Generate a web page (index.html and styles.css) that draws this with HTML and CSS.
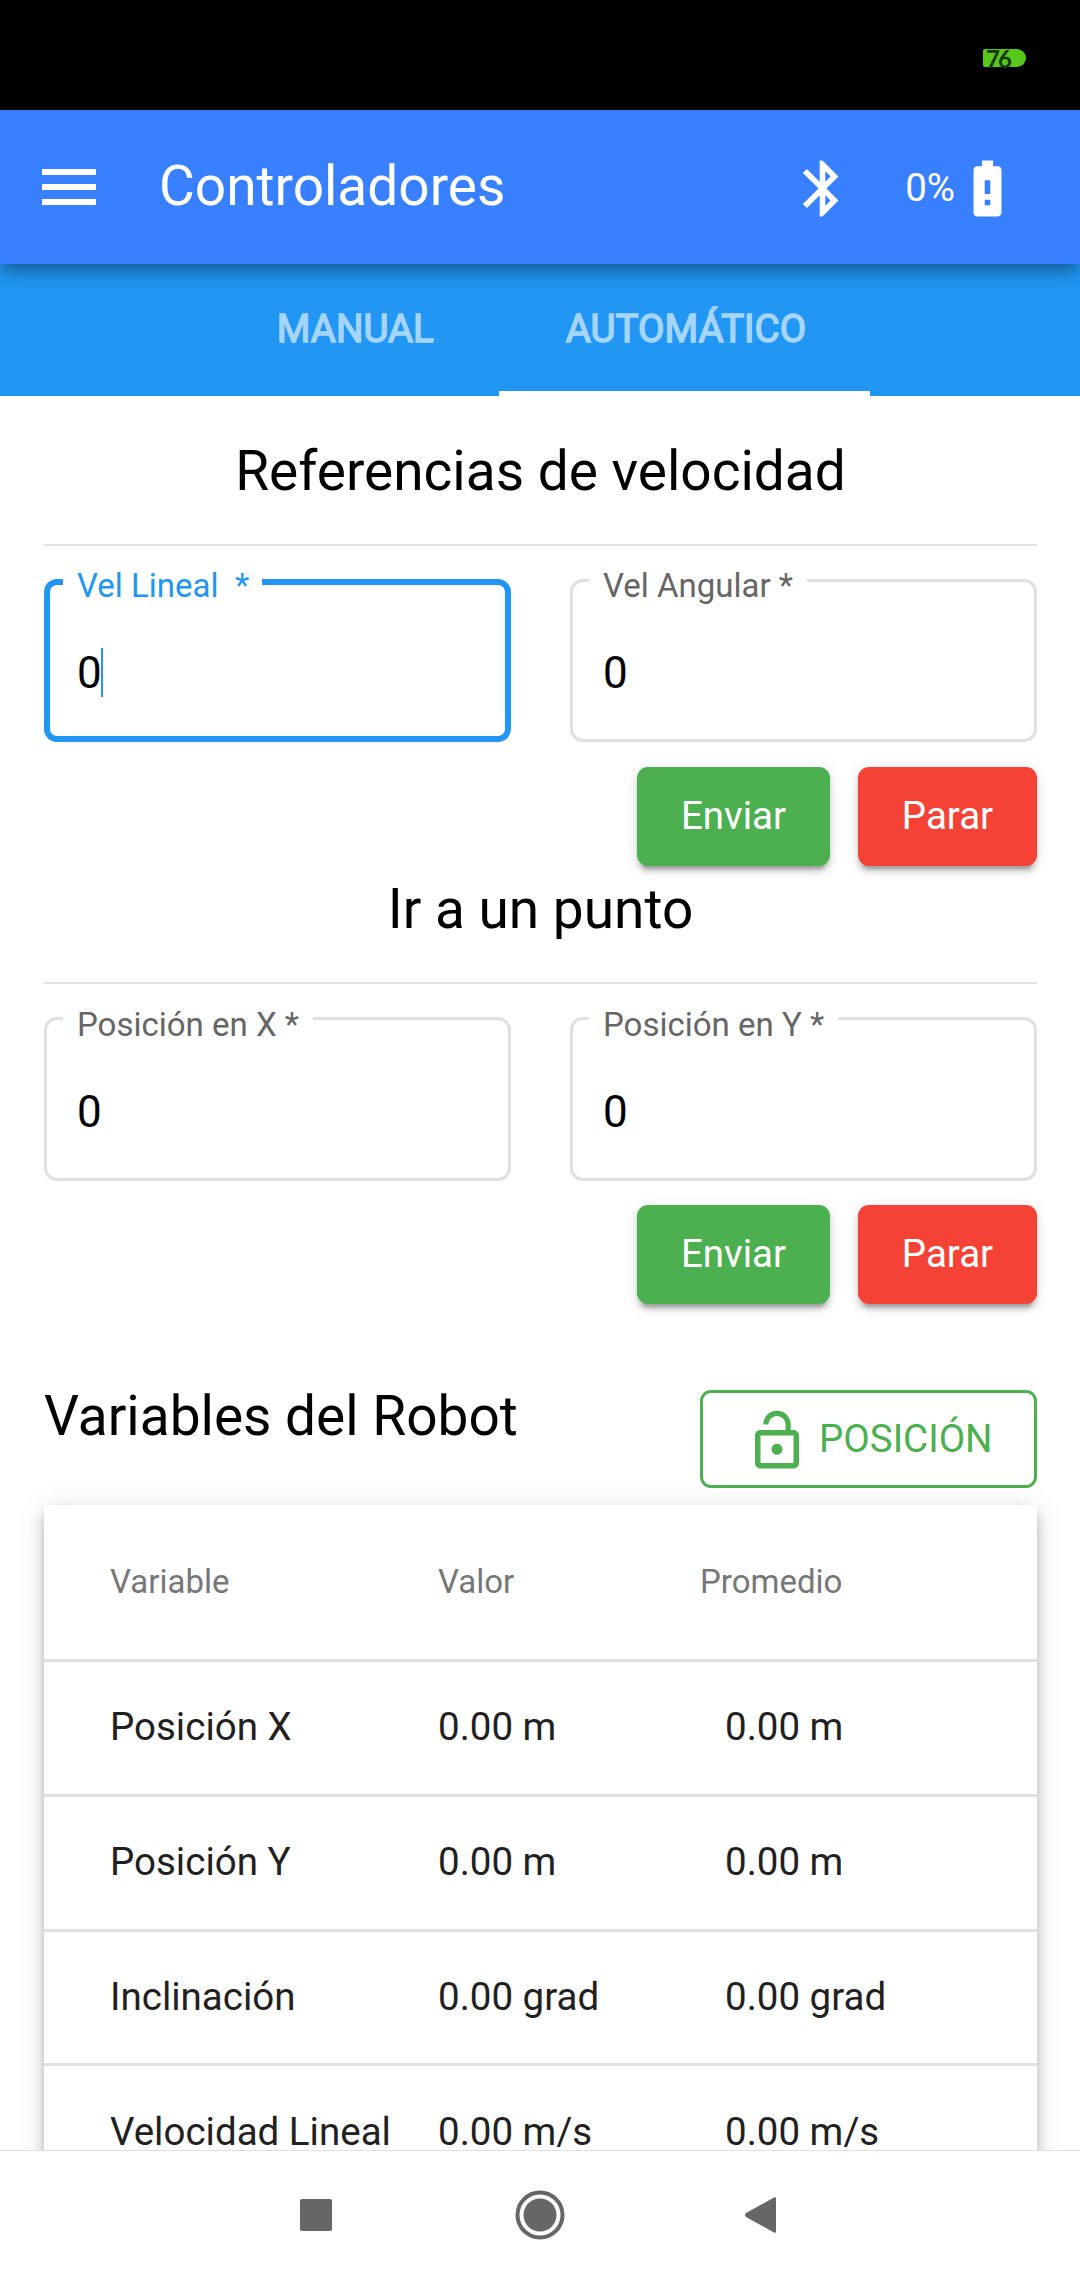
FILE: index.html
```html
<!DOCTYPE html>
<html lang="es">
<head>
<meta charset="utf-8">
<title>Controladores</title>
<link rel="stylesheet" href="styles.css">
</head>
<body>
<div class="status"><div class="charge">76</div></div>
<header class="appbar">
  <svg class="menu" viewBox="0 0 24 24"><path d="M3 6h18v2H3zM3 11h18v2H3zM3 16h18v2H3z"/></svg>
  <h1 class="title">Controladores</h1>
  <svg class="bluetooth" viewBox="0 0 24 24"><path d="M17.71 7.71L12 2h-1v7.59L6.41 5 5 6.41 10.59 12 5 17.59 6.41 19 11 14.41V22h1l5.71-5.71-4.3-4.29 4.3-4.29zM13 5.83l1.88 1.88L13 9.59V5.83zm1.88 10.46L13 18.17v-3.76l1.88 1.88z"/></svg>
  <span class="percent">0%</span>
  <svg class="battery" viewBox="0 0 24 24"><path d="M15.67 4H14V2h-4v2H8.33C7.6 4 7 4.6 7 5.33v15.33C7 21.4 7.6 22 8.33 22h7.33c.74 0 1.34-.6 1.34-1.33V5.33C17 4.6 16.4 4 15.67 4zM13 18h-2v-2h2v2zm0-4h-2V9h2v5z"/></svg>
</header>
<nav class="tabs">
  <div class="tab">MANUAL</div>
  <div class="tab active">AUTOMÁTICO</div>
</nav>
<main class="content">
  <h2 class="heading first">Referencias de velocidad</h2>
  <div class="fields">
    <div class="field focused"><label class="label">Vel Lineal&nbsp; *</label><span>0</span><i class="caret"></i></div>
    <div class="field"><label class="label">Vel Angular *</label><span>0</span></div>
  </div>
  <div class="actions"><button class="btn send">Enviar</button><button class="btn stop">Parar</button></div>
  <h2 class="heading">Ir a un punto</h2>
  <div class="fields point">
    <div class="field"><label class="label">Posición en X *</label><span>0</span></div>
    <div class="field"><label class="label">Posición en Y *</label><span>0</span></div>
  </div>
  <div class="actions point-actions"><button class="btn send">Enviar</button><button class="btn stop">Parar</button></div>
  <div class="robot">
    <h2 class="robot-title">Variables del Robot</h2>
    <button class="outlined">
      <svg class="lock" viewBox="0 0 24 24"><path d="M12 17c1.1 0 2-.9 2-2s-.9-2-2-2-2 .9-2 2 .9 2 2 2zm6-9h-1V6c0-2.76-2.24-5-5-5S7 3.24 7 6h1.9c0-1.71 1.39-3.1 3.1-3.1 1.71 0 3.1 1.39 3.1 3.1v2H6c-1.1 0-2 .9-2 2v10c0 1.1.9 2 2 2h12c1.1 0 2-.9 2-2V10c0-1.1-.9-2-2-2zm0 12H6V10h12v10z"/></svg>
      <span>POSICIÓN</span>
    </button>
  </div>
  <div class="table">
    <div class="row head"><span>Variable</span><span>Valor</span><span>Promedio</span></div>
    <div class="row"><span>Posición X</span><span>0.00 m</span><span class="avg">0.00 m</span></div>
    <div class="row"><span>Posición Y</span><span>0.00 m</span><span class="avg">0.00 m</span></div>
    <div class="row"><span>Inclinación</span><span>0.00 grad</span><span class="avg">0.00 grad</span></div>
    <div class="row"><span>Velocidad Lineal</span><span>0.00 m/s</span><span class="avg">0.00 m/s</span></div>
  </div>
</main>
<footer class="sysnav">
  <svg class="key" viewBox="0 0 50 50"><rect x="9" y="9" width="32" height="32" rx="2"/></svg>
  <svg class="key" viewBox="0 0 50 50"><circle cx="25" cy="25" r="22.5" fill="none" stroke="#666" stroke-width="4"/><circle cx="25" cy="25" r="16.5"/></svg>
  <svg class="key" viewBox="0 0 50 50"><path d="M39 7.500Q41 6.500 41 8.500V41.500Q41 43.500 39 42.500L11 27Q9 25 11 23Z"/></svg>
</footer>
</body>
</html>
```
FILE: styles.css
```css
* { box-sizing: border-box; }
html, body { margin: 0; height: 2280px; overflow: hidden; }
body {
  display: flex;
  flex-direction: column;
  width: 1080px;
  background: #fff;
  color: #000;
  font-family: Roboto, "Liberation Sans", sans-serif;
  font-size: 38.5px;
}
h1, h2 { margin: 0; font-size: 55px; font-weight: 400; }
button { border: 0; margin: 0; font: inherit; }
svg { display: block; fill: currentColor; flex: none; }

.status {
  flex: none;
  height: 110px;
  padding: 49px 54px 0 0;
  display: flex;
  justify-content: flex-end;
  background: #000;
}
.charge {
  width: 43px;
  height: 18px;
  padding-left: 3px;
  border-radius: 2px 9px 9px 2px;
  background: #57c71a;
  color: #17390a;
  font: 700 24px/19px Lato, sans-serif;
  letter-spacing: -2px;
}

.appbar {
  flex: none;
  position: relative;
  z-index: 2;
  display: flex;
  align-items: center;
  height: 154px;
  padding: 0 58px 0 33px;
  background: #3880ff;
  color: #fff;
  box-shadow: 0 5.5px 11px -2.75px rgba(0,0,0,.2), 0 11px 13.75px rgba(0,0,0,.14), 0 2.75px 27.5px rgba(0,0,0,.12);
}
.menu { width: 72px; height: 72px; }
.title { margin-left: 54px; flex: 1; padding-bottom: 2px; }
.bluetooth { width: 67px; height: 67px; margin: 2px 49px 0 0; }
.battery { width: 67px; height: 67px; margin: 3px 1px 0 -1px; }

.tabs {
  flex: none;
  display: flex;
  justify-content: center;
  height: 132px;
  background: #2196f3;
  color: #a6d5fa;
}
.tab {
  padding: 0 65px 0 67px;
  border-bottom: 5px solid transparent;
  font-size: 38.5px;
  font-weight: 400;
  line-height: 129px;
  -webkit-text-stroke: 1.5px #a6d5fa;
}
.tab.active { border-bottom-color: #fff; padding-right: 64px; }

.content { flex: 1; min-height: 0; overflow: hidden; padding: 0 43px 0 44px; }
.heading {
  padding-bottom: 30px;
  border-bottom: 2px solid #e0e0e0;
  line-height: 86px;
  text-align: center;
}
.heading.first { padding-top: 32px; }
.fields { display: grid; grid-template-columns: 467px 467px; justify-content: space-between; margin-top: 33px; }
.field {
  position: relative;
  display: flex;
  align-items: center;
  height: 163px;
  padding: 24px 33px 0;
  border-radius: 13px;
  box-shadow: inset 0 0 0 3px #e0e0e0;
  font-size: 44px;
}
.point .field { height: 164px; padding-top: 26px; }
.label {
  position: absolute;
  left: 19px;
  top: -10px;
  padding: 0 14px;
  background: #fff;
  color: #666;
  font-size: 33px;
  line-height: 34px;
  white-space: nowrap;
}
.point .label { top: -9px; }
.field.focused { box-shadow: inset 0 0 0 6px #2196f3; }
.focused .label { color: #2196f3; padding-right: 13px; }
.caret { width: 2px; height: 49px; margin-left: -1px; background: #2196f3; }

.actions { display: flex; justify-content: flex-end; gap: 28px; margin-top: 25px; }
.point-actions { margin-top: 24px; }
.btn {
  height: 99px;
  padding: 0 0 2px;
  border-radius: 11px;
  color: #fff;
  box-shadow: 0 8.25px 2.75px -5.5px rgba(0,0,0,.2), 0 5.5px 5.5px rgba(0,0,0,.14), 0 2.75px 13.75px rgba(0,0,0,.12);
}
.send { width: 193px; background: #4caf50; }
.stop { width: 179px; background: #f44336; }

.robot { display: flex; justify-content: space-between; align-items: flex-start; margin-top: 86px; }
.robot-title { line-height: 52px; }
.outlined {
  display: flex;
  align-items: center;
  gap: 9px;
  width: 337px;
  height: 98px;
  padding: 0 0 0 41px;
  border: 3px solid #4caf50;
  border-radius: 11px;
  background: transparent;
  color: #4caf50;
}
.outlined span { padding-bottom: 2px; }
.lock { width: 66px; height: 66px; margin-top: 3px; }

.table {
  margin-top: 17px;
  background: #fff;
  box-shadow: 0 5.5px 11px -2.75px rgba(0,0,0,.2), 0 11px 13.75px rgba(0,0,0,.14), 0 2.75px 27.5px rgba(0,0,0,.12);
}
.row {
  display: grid;
  grid-template-columns: 328px 262px 1fr;
  align-items: center;
  height: 134.75px;
  padding: 0 0 2px 66px;
  border-bottom: 3px solid #e0e0e0;
  color: #212121;
  white-space: nowrap;
}
.row.head { height: 157px; color: #777; font-size: 33px; }
.avg { padding-left: 25px; }

.sysnav {
  flex: none;
  position: relative;
  display: flex;
  justify-content: center;
  gap: 172px;
  height: 130px;
  padding: 39px 4px 0 0;
  border-top: 1px solid #e0e0e0;
  background: #fff;
  color: #666;
}
.key { width: 50px; height: 50px; }
.key:nth-child(2) { margin-left: 2px; }
.key:nth-child(3) { margin-left: -2px; }
```
